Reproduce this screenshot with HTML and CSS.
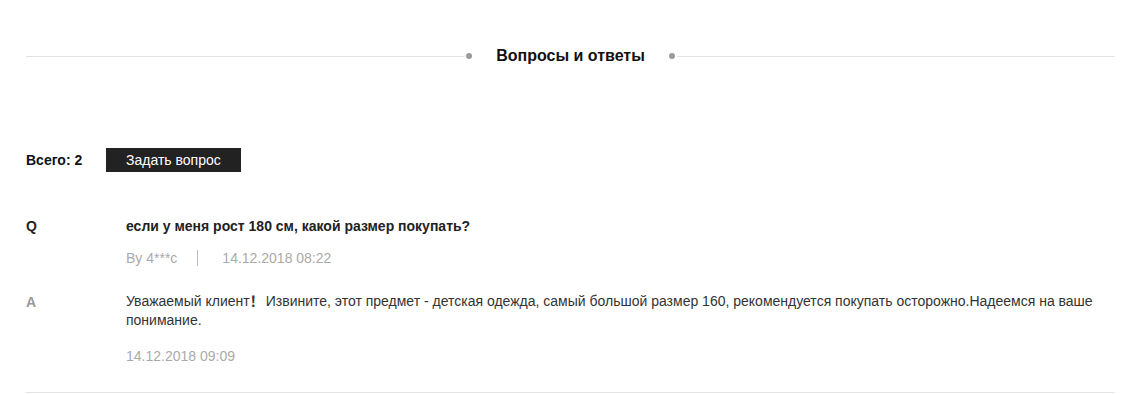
FILE: index.html
```html
<!DOCTYPE HTML>
<html>
<head>
<meta charset="utf-8">
<title>Вопросы и ответы</title>
<link rel="stylesheet" href="styles.css">
</head>
<body>
<div id="qa">
	<div class="qa-title">
		<span class="qa-line"></span>
		<span class="qa-dot"></span>
		<h2>Вопросы и ответы</h2>
		<span class="qa-dot"></span>
		<span class="qa-line"></span>
	</div>

	<div class="qa-bar">
		<span class="qa-total">Всего: 2</span>
		<button class="qa-ask">Задать вопрос</button>
	</div>

	<div class="qa-item">
		<div class="qa-row">
			<div class="qa-mark">Q</div>
			<div class="qa-body">
				<div class="qa-question">если у меня рост 180 см, какой размер покупать?</div>
				<div class="qa-meta"><span>By 4***c</span><span class="qa-sep"></span><span>14.12.2018 08:22</span></div>
			</div>
		</div>
		<div class="qa-row">
			<div class="qa-mark qa-mark-a">A</div>
			<div class="qa-body">
				<div class="qa-answer">Уважаемый клиент<b>！</b>Извините, этот предмет - детская одежда, самый большой размер 160, рекомендуется покупать осторожно.Надеемся на ваше понимание.</div>
				<div class="qa-meta qa-meta-a"><span>14.12.2018 09:09</span></div>
			</div>
		</div>
	</div>
</div>
</body>
</html>
```

FILE: styles.css
```css
body {
	margin: 0px;
	padding: 0px;
	background: #fff;
	font-family: "Liberation Sans", Arial, "Noto Sans CJK SC", sans-serif;
	color: #222;
}
#qa {
	margin: 0px 25px 0px 26px;
	padding-top: 45px;
	border-bottom: 1px solid #e3e3e3;
	padding-bottom: 26px;
}
.qa-title {
	display: flex;
	align-items: center;
}
.qa-title h2 {
	margin: 0px 22px;
	font-size: 16px;
	font-weight: bold;
	color: #111;
	line-height: 22px;
}
.qa-line {
	flex: 1;
	height: 1px;
	background: #e3e3e3;
}
.qa-dot {
	width: 6px;
	height: 6px;
	border-radius: 50%;
	background: #999;
	margin: 0px 2px;
}
.qa-bar {
	display: flex;
	align-items: center;
	margin-top: 81px;
}
.qa-total {
	font-size: 14px;
	font-weight: bold;
	color: #111;
	width: 80px;
}
.qa-ask {
	background: #222;
	color: #fff;
	border: 0;
	height: 24px;
	padding: 0px 20px;
	font-family: inherit;
	font-size: 14px;
	cursor: pointer;
}
.qa-item {
	margin-top: 44px;
}
.qa-row {
	display: flex;
	margin-bottom: 24px;
}
.qa-row:last-child {
	margin-bottom: 0px;
}
.qa-mark {
	width: 100px;
	font-size: 14px;
	font-weight: bold;
	color: #222;
	line-height: 20px;
}
.qa-mark-a {
	color: #999;
}
.qa-body {
	flex: 1;
}
.qa-question {
	font-size: 14px;
	font-weight: bold;
	color: #222;
	line-height: 20px;
}
.qa-answer {
	font-size: 14px;
	color: #333;
	line-height: 19px;
}
.qa-answer b {
	font-weight: bold;
	margin-right: 2px;
}
.qa-meta {
	display: flex;
	align-items: center;
	margin-top: 12px;
	font-size: 14px;
	color: #aaa;
	line-height: 20px;
}
.qa-meta-a {
	margin-top: 16px;
}
.qa-sep {
	width: 1px;
	height: 16px;
	background: #bbb;
	margin: 0px 24px 0px 20px;
}
```
